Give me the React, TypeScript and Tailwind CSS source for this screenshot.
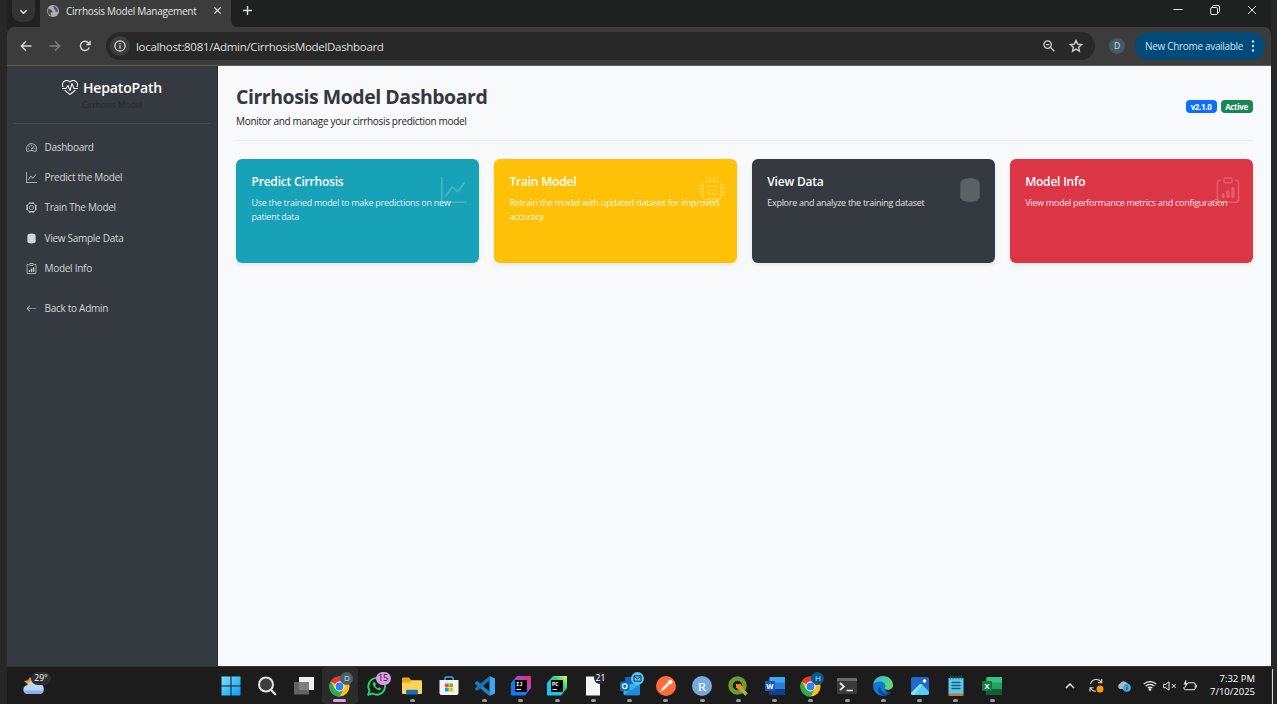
import React from "react";
import { BsHeartPulse, BsSpeedometer2, BsGraphUp, BsCpu, BsClipboardData, BsArrowLeft } from "react-icons/bs";

type IconProps = { className?: string };

function DataBlob({ className = "" }: IconProps) {
  return (
    <svg viewBox="0 0 16 16" fill="currentColor" className={className}>
      <path d="M2 4C2 2 4.5 .7 8 .7S14 2 14 4v8c0 2-2.500 3.300-6 3.300S2 14 2 12z" />
    </svg>
  );
}

const navItems = [
  { label: "Dashboard", Icon: BsSpeedometer2 },
  { label: "Predict the Model", Icon: BsGraphUp },
  { label: "Train The Model", Icon: BsCpu },
  { label: "View Sample Data", Icon: DataBlob },
  { label: "Model Info", Icon: BsClipboardData },
];

const cards = [
  { title: "Predict Cirrhosis", text: ["Use the trained model to make predictions on new", "patient data"], Icon: BsGraphUp, bg: "bg-[#18a2b8]" },
  { title: "Train Model", text: ["Retrain the model with updated dataset for improved", "accuracy"], Icon: BsCpu, bg: "bg-[#ffc108]" },
  { title: "View Data", text: ["Explore and analyze the training dataset"], Icon: DataBlob, bg: "bg-[#343a40]" },
  { title: "Model Info", text: ["View model performance metrics and configuration"], Icon: BsClipboardData, bg: "bg-[#dc3546]" },
];

function Chrome({ badge, color }: { badge: string; color: string }) {
  return (
    <div className="relative">
      <svg viewBox="0 0 48 48" className="size-[21px]">
        <circle cx="24" cy="24" r="23" fill="#fbc116" />
        <path d="M24 24 4 12.500A23 23 0 0 1 44 12.500H24z" fill="#e33b2e" />
        <path d="M4 12.500A23 23 0 0 0 24 47l10-17.300L24 24 14 29.700z" fill="#2da94f" />
        <circle cx="24" cy="24" r="11.500" fill="#fff" />
        <circle cx="24" cy="24" r="9" fill="#3b7ded" />
      </svg>
      <span className={`absolute -top-[4px] left-[11px] flex size-[13px] items-center justify-center rounded-full text-[8px] text-[#d5e3ea] ${color}`}>{badge}</span>
    </div>
  );
}

function Office({ letter, light, mid, dark, box }: { letter: string; light: string; mid: string; dark: string; box: string }) {
  return (
    <svg viewBox="0 0 20 20" className="size-5">
      <rect x="4.500" y="1" width="15.500" height="18" rx="1" fill={mid} />
      <path d="M4.500 2a1 1 0 0 1 1-1H19a1 1 0 0 1 1 1v4.500H4.500z" fill={light} />
      <path d="M4.500 13H20v5a1 1 0 0 1-1 1H5.500a1 1 0 0 1-1-1z" fill={dark} />
      <rect x="0" y="5" width="10" height="10" rx="1" fill={box} />
      <text x="5" y="12.800" textAnchor="middle" fontSize="7.500" fontWeight="700" fill="#fff" fontFamily="Open Sans, sans-serif">{letter}</text>
    </svg>
  );
}

function JetBrains({ label, a, b, c }: { label: string; a: string; b: string; c: string }) {
  return (
    <svg viewBox="0 0 20 20" className="size-5">
      <defs>
        <linearGradient id={`jb${label}`} x1="0" y1="1" x2="1" y2="0">
          <stop offset=".35" stopColor={a} />
          <stop offset=".65" stopColor={b} />
          <stop offset="1" stopColor={c} />
        </linearGradient>
      </defs>
      <path d="M6 0h13q1 0 1 1v11l-6 7.500H1q-1 0-1-1V7z" fill={`url(#jb${label})`} />
      <rect x="4" y="4" width="12" height="12" fill="#000" />
      <text x="5" y="10" fontSize="5.500" fontWeight="700" fill="#fff" fontFamily="Liberation Mono, monospace">{label}</text>
      <rect x="5.500" y="13" width="4.500" height="1" fill="#fff" />
    </svg>
  );
}

const apps: { icon: React.ReactNode; run: boolean; active?: boolean }[] = [
  {
    run: false,
    icon: (
      <svg viewBox="0 0 20 20" className="size-5">
        <defs>
          <linearGradient id="win" x1="0" y1="0" x2="1" y2="1" gradientUnits="objectBoundingBox">
            <stop stopColor="#7fe0fc" />
            <stop offset="1" stopColor="#0a9bf5" />
          </linearGradient>
        </defs>
        <path d="M.5 .5h9v9h-9zM10.500 .5h9v9h-9zM.5 10.500h9v9h-9zM10.500 10.500h9v9h-9z" fill="url(#win)" />
      </svg>
    ),
  },
  {
    run: false,
    icon: (
      <svg viewBox="0 0 20 20" className="size-5">
        <circle cx="9" cy="8.500" r="7" fill="#3d3d3d" stroke="#e4e4e4" strokeWidth="2" />
        <path d="m14.200 14 4 4.300" stroke="#e4e4e4" strokeWidth="2.200" strokeLinecap="round" />
      </svg>
    ),
  },
  {
    run: false,
    icon: (
      <svg viewBox="0 0 20 20" className="size-5">
        <rect x="5" y="1" width="15" height="13" fill="#f0f0f0" />
        <rect x="0" y="6" width="15" height="12.500" fill="#6e6e6e" fillOpacity=".88" />
      </svg>
    ),
  },
  { run: true, active: true, icon: <Chrome badge="D" color="bg-[#46606c]" /> },
  {
    run: false,
    icon: (
      <div className="relative">
        <svg viewBox="0 0 24 24" className="size-[21px]" fill="none">
          <path d="M2.500 21.500 4 16.500A9.500 9.500 0 1 1 7.500 20z" stroke="#25d366" strokeWidth="2.200" strokeLinejoin="round" />
          <path d="M8 7.500c-2 3 4.500 10 8.500 8.500l.8-2-2.300-1.200-1.200 1.200c-1.500-.5-2.800-1.800-3.300-3.300l1-1.200L10.200 7z" fill="#25d366" />
        </svg>
        <span className="absolute -top-[4px] left-[10px] flex h-[13px] w-[15px] items-center justify-center rounded-full bg-[#dd9be6] text-[9px] text-[#241026]">15</span>
      </div>
    ),
  },
  {
    run: true,
    icon: (
      <svg viewBox="0 0 20 20" className="size-5">
        <path d="M0 2.500q0-1 1-1h6l2 2.500h10q1 0 1 1v5H0z" fill="#e8a317" />
        <path d="M0 6.500h7l1.500-1.500H19q1 0 1 1V17q0 1-1 1H1q-1 0-1-1z" fill="#ffd358" />
        <path d="M4 18.500v-3.500q0-1.300 1.300-1.300h9.400q1.300 0 1.300 1.300v3.500z" fill="#1570c0" />
      </svg>
    ),
  },
  {
    run: false,
    icon: (
      <svg viewBox="0 0 20 20" className="size-5">
        <path d="M6 5V2q0-1 1-1h6q1 0 1 1v3" stroke="#35a9e8" strokeWidth="1.500" fill="none" />
        <path d="M.5 4h19v13q0 2-2 2h-15q-2 0-2-2z" fill="#f3f3f3" />
        <path d="M6 7.500h3.700v3.700H6z" fill="#f25022" />
        <path d="M10.300 7.500H14v3.700h-3.700z" fill="#7fba00" />
        <path d="M6 11.800h3.700v3.700H6z" fill="#00a4ef" />
        <path d="M10.300 11.800H14v3.700h-3.700z" fill="#ffb900" />
      </svg>
    ),
  },
  {
    run: true,
    icon: (
      <svg viewBox="0 0 20 20" className="size-5">
        <path d="M14.500 0 20 2.400v15.200L14.500 20z" fill="#3aa7f2" />
        <path d="M0 6.700 2 5l12.500 10.500V20L0 7.800z" fill="#1b86cf" />
        <path d="M0 13.300 2 15 14.500 4.500V0L0 12.200z" fill="#1174b8" />
      </svg>
    ),
  },
  { run: true, icon: <JetBrains label="IJ" a="#0a7cff" b="#b044c8" c="#fe2857" /> },
  { run: true, icon: <JetBrains label="PC" a="#14c8ee" b="#21d789" c="#fcf84a" /> },
  {
    run: true,
    icon: (
      <div className="relative">
        <svg viewBox="0 0 14 20" className="h-5 w-[14px]">
          <path d="M0 .5h9l5 5v14H0z" fill="#f5f5f5" />
        </svg>
        <span className="absolute -top-[4px] left-[8px] flex size-[12px] items-center justify-center rounded-full bg-[#292833] text-[8.500px] text-white">21</span>
      </div>
    ),
  },
  {
    run: true,
    icon: (
      <div className="relative">
        <svg viewBox="0 0 20 20" className="size-5">
          <rect x="5" y="1" width="13" height="11" fill="#1066b8" />
          <path d="M3.500 8 19.500 8v10q0 1.200-1.200 1.200H5q-1.500 0-1.500-1.500z" fill="#35b1ee" />
          <path d="M3.500 19 20 8.500V18q0 1.200-1.200 1.200z" fill="#1b8ddb" />
          <rect x="0" y="5.500" width="9.500" height="9.500" rx="1" fill="#0f6cbd" />
          <circle cx="4.750" cy="10.250" r="2.300" fill="none" stroke="#fff" strokeWidth="1.300" />
        </svg>
        <svg viewBox="0 0 13 13" className="absolute -top-[4px] left-[11px] size-[13px]">
          <circle cx="6.500" cy="6.500" r="6.500" fill="#5cc3ee" />
          <path d="M3 3.800h7v5.400H3zM3 4.300l3.500 2.500L10 4.300" fill="none" stroke="#123a50" />
        </svg>
      </div>
    ),
  },
  {
    run: true,
    icon: (
      <svg viewBox="0 0 20 20" className="size-5">
        <circle cx="10" cy="10" r="10" fill="#ff6c37" />
        <path d="M4.500 15.500 7 11.500l5-5 1.500 1.500-5 5zM12.300 6.300a2 2 0 1 1 1.700 1.700z" fill="#fff" stroke="#fff" strokeWidth=".5" />
      </svg>
    ),
  },
  {
    run: true,
    icon: (
      <svg viewBox="0 0 20 20" className="size-5">
        <circle cx="10" cy="10" r="10" fill="#75aadb" />
        <text x="10.200" y="14.500" textAnchor="middle" fontSize="13" fill="#fff" fontFamily="Liberation Serif, serif">R</text>
      </svg>
    ),
  },
  {
    run: true,
    icon: (
      <svg viewBox="0 0 20 20" className="size-5">
        <circle cx="9.500" cy="9.500" r="7" fill="none" stroke="#6a9c2b" strokeWidth="4.500" />
        <path d="m10 10 8.500 8.500" stroke="#95c13d" strokeWidth="3.500" />
        <path d="M8 8h4.500l3 4-3.300 3L8 11.500z" fill="#ef8a1b" />
      </svg>
    ),
  },
  { run: true, icon: <Office letter="W" light="#41a5ee" mid="#2b7cd3" dark="#103f91" box="#185abd" /> },
  { run: true, icon: <Chrome badge="H" color="bg-[#0b5596]" /> },
  {
    run: true,
    icon: (
      <svg viewBox="0 0 20 20" className="size-5">
        <path d="M0 3q0-1 1-1h18q1 0 1 1v4H0z" fill="#6b6b6b" />
        <path d="M0 5h20v12q0 1-1 1H1q-1 0-1-1z" fill="#3b3b3b" />
        <path d="m3 7 4 3.500L3 14M9.500 14.500H16" stroke="#f0f0f0" strokeWidth="1.700" fill="none" />
      </svg>
    ),
  },
  {
    run: true,
    icon: (
      <svg viewBox="0 0 20 20" className="size-5">
        <defs>
          <linearGradient id="edge" x1="0" x2="1" y1="0" y2=".5">
            <stop stopColor="#2bb5f0" />
            <stop offset="1" stopColor="#5fdc6b" />
          </linearGradient>
        </defs>
        <circle cx="10" cy="10" r="10" fill="#1277d0" />
        <path d="M.2 8.500C1 3.500 5 0 10 0c5.500 0 10 4 10 9 0 3-2.500 5-5 5-2 0-3.300-.7-3.300-1.700 0-.6.8-1 .8-2.300C12.500 7.500 10 5.500 7 5.500 4 5.500 1.500 6.500.2 8.500z" fill="url(#edge)" />
        <path d="M7.200 10.500c0 4 3.300 7 8 6.500 1-.1 2-.5 3-1C16.500 18.500 13.500 20 10.500 20 7 19 4.800 16 5.200 12.500z" fill="#0c4a9c" />
        <path d="M11.700 12.300c0 1 1.300 1.700 3.300 1.700 2 0 3.600-1 4.500-2.500l.5 2.500-1.800 2c-3 1.500-6 0-6.500-3.700z" fill="#1c1c1c" />
      </svg>
    ),
  },
  {
    run: true,
    icon: (
      <svg viewBox="0 0 20 20" className="size-5">
        <rect x="1" y="1" width="18" height="18" rx="2" fill="#2468c8" />
        <path d="M1 17 9.500 8.500q1.300-1.200 2.600 0L19 15.500V17q0 2-2 2H3q-2 0-2-2z" fill="#58cdf5" />
        <path d="M1 17 9.500 8.500q1.300-1.200 2.600 0L4 19H3q-2 0-2-2z" fill="#8ae3fa" />
        <circle cx="14.500" cy="5" r="1.800" fill="#fff" />
      </svg>
    ),
  },
  {
    run: true,
    icon: (
      <svg viewBox="0 0 16 20" className="h-5 w-4">
        <path d="M.5 2h15v16H.5z" fill="#5cc8e8" />
        <path d="M.5 17.500h15V20H.5z" fill="#c8763a" />
        <path d="M2.500 .3v3M5.200 .3v3M8 .3v3M10.800 .3v3M13.500 .3v3" stroke="#146f93" strokeWidth="1.200" />
        <path d="M3.500 6.500h9M3.500 9.500h9M3.500 12.500h9" stroke="#155f80" strokeWidth="1.300" />
      </svg>
    ),
  },
  { run: true, icon: <Office letter="X" light="#33c481" mid="#21a366" dark="#185c37" box="#107c41" /> },
];

function TabStrip() {
  return (
    <div className="flex h-[27px] items-start bg-[#1f2120]">
      <div className="flex h-[27px] w-[33px] items-start pl-[5px]">
        <div className="flex h-[22px] w-[23px] items-center justify-center rounded-b-[9px] bg-[#333433]">
          <svg viewBox="0 0 10 10" className="size-[9px]" fill="none" stroke="#e6e6e6" strokeWidth="1.600"><path d="m1.500 3.500 3.500 3.500 3.500-3.500" /></svg>
        </div>
      </div>
      <div className="flex h-[27px] w-[191px] items-center bg-[#3c3c3c] pb-[6px]">
        <svg viewBox="0 0 24 24" className="ml-[7px] size-[12px]">
          <circle cx="12" cy="12" r="12" fill="#a9b0b7" />
          <path d="M3 6.500c2 3 5 2 7 4.500s1 4-1 4-2 3 0 6.500c-5-1-8.500-6-7.500-12zM13 2c-1 3 2 3 1 5s4 2 3 5 3 2 4.500 1C22 7 18 2.500 13 2z" fill="#4b5157" />
        </svg>
        <span className="relative top-[0.500px] ml-[7px] text-[10px] tracking-[-0.270px] whitespace-nowrap text-[#e3e3e3]">Cirrhosis Model Management</span>
        <svg viewBox="0 0 10 10" className="mr-[9px] ml-auto size-[9px]" stroke="#e6e6e6" strokeWidth="1.400"><path d="m1.500 1.500 7 7M8.500 1.500l-7 7" /></svg>
      </div>
      <svg viewBox="0 0 6 6" className="mt-[21px] size-[6px]" fill="#3c3c3c"><path d="M0 0a6 6 0 0 0 6 6H0z" /></svg>
      <svg viewBox="0 0 10 10" className="mt-[5px] ml-[5px] size-[11px]" stroke="#e0e0e0" strokeWidth="1.300"><path d="M5 1v8M1 5h8" /></svg>
      <div className="mt-[4px] mr-[14px] ml-auto flex items-center gap-[27px] text-[#e8e8e8]">
        <svg viewBox="0 0 10 12" className="h-3 w-[10px]" stroke="currentColor"><path d="M.5 5.500h9" /></svg>
        <svg viewBox="0 0 10 12" className="h-3 w-[10px]" stroke="currentColor" fill="none"><rect x=".7" y="3.500" width="6.800" height="7" rx="1.300" /><path d="M2.500 3V2.500q0-1 1-1H8q1.500 0 1.500 1.500v4.500q0 1-1.500 1" /></svg>
        <svg viewBox="0 0 10 12" className="h-3 w-[10px]" stroke="currentColor"><path d="m1 2 8 8M9 2l-8 8" /></svg>
      </div>
    </div>
  );
}

function Toolbar() {
  return (
    <div className="bg-[#1f2120]">
      <div className="flex h-[39px] items-center rounded-t-[7px] border-b border-[#5a5b5b] bg-[#3c3c3c]">
        <svg viewBox="0 0 12 12" className="ml-[13px] size-3" fill="none" stroke="#d8d8d8" strokeWidth="1.400"><path d="M11.500 6H1.500M6 1.300 1.300 6 6 10.700" /></svg>
        <svg viewBox="0 0 12 12" className="ml-[17px] size-3" fill="none" stroke="#7f7f7f" strokeWidth="1.400"><path d="M.5 6h10M6 1.300 10.700 6 6 10.700" /></svg>
        <svg viewBox="0 0 12 12" className="ml-[18px] size-3" fill="none" stroke="#d8d8d8" strokeWidth="1.400"><path d="M10.300 7.500A4.600 4.600 0 1 1 9.600 3L10.800 4.300M11 .8v3.700H7.300" /></svg>
        <div className="ml-[15px] flex h-[28px] w-[989px] items-center rounded-full bg-[#282828] pl-[4px]">
          <span className="flex size-[20px] items-center justify-center rounded-full bg-[#3c3c3c]">
            <svg viewBox="0 0 12 12" className="size-3" fill="none" stroke="#e3e3e3" strokeWidth="1.200"><circle cx="6" cy="6" r="5.200" /><path d="M6 5.300v3.500M6 3v1.300" /></svg>
          </span>
          <span className="mt-px ml-[6px] text-[11.500px] tracking-[-0.310px] whitespace-nowrap text-[#dedede]">localhost:8081/Admin/CirrhosisModelDashboard</span>
          <svg viewBox="0 0 12 12" className="ml-auto size-3" fill="none" stroke="#d0d0d0" strokeWidth="1.300"><circle cx="4.600" cy="4.600" r="3.700" /><path d="m7.300 7.300 4 4M3 4.600h3.200" /></svg>
          <svg viewBox="0 0 24 24" className="mr-[12px] ml-[14px] size-[14px]" fill="none" stroke="#d8d8d8" strokeWidth="2.200"><path d="m12 2.500 2.800 6.300 6.900.7-5.200 4.600 1.500 6.800-6-3.600-6 3.600 1.500-6.800-5.200-4.600 6.900-.7z" /></svg>
        </div>
        <span className="ml-[14px] flex size-[16px] items-center justify-center rounded-full bg-[#455a64] text-[8.500px] text-[#d8e6ee]">D</span>
        <div className="ml-[10px] flex h-[28px] w-[130px] items-center rounded-full bg-[#024a77] pl-[10px]">
          <span className="text-[10px] tracking-[-0.320px] whitespace-nowrap text-[#c5e4fa]">New Chrome available</span>
          <svg viewBox="0 0 4 14" className="mr-[10px] ml-auto h-[14px] w-1" fill="#c5e4fa"><circle cx="2" cy="2.500" r="1.200" /><circle cx="2" cy="7" r="1.200" /><circle cx="2" cy="11.500" r="1.200" /></svg>
        </div>
      </div>
    </div>
  );
}

function Sidebar() {
  return (
    <aside className="flex w-[211px] flex-col border-r border-[#2a2e33] bg-[#343a40] px-[7px]">
      <div className="flex h-[58px] flex-col items-center border-b border-[#474d55] pt-[13px]">
        <div className="flex h-[18px] items-center gap-[5px] text-white">
          <BsHeartPulse className="size-[16px]" />
          <span className="text-[14px] leading-[18px] font-semibold tracking-[-0.170px] whitespace-nowrap">HepatoPath</span>
        </div>
        <span className="text-[8.500px] leading-[15px] tracking-[-0.140px] whitespace-nowrap text-[#272b2f]">Cirrhosis Model</span>
      </div>
      <nav className="flex flex-col pt-[8px] text-[10px] tracking-[-0.280px] text-[#d3d6d8]">
        {navItems.map(({ label, Icon }) => (
          <a key={label} className="flex h-[30.300px] items-center pl-[11.500px]">
            <Icon className="mr-[8px] size-[11px]" />
            <span className="whitespace-nowrap">{label}</span>
          </a>
        ))}
        <a className="mt-[10px] flex h-[30.300px] items-center pl-[11.500px]">
          <BsArrowLeft className="mr-[8px] size-[11px]" />
          <span className="whitespace-nowrap">Back to Admin</span>
        </a>
      </nav>
    </aside>
  );
}

function Main() {
  return (
    <main className="flex-1 bg-[#f8f9fb] pr-[18.500px] pl-[18px]">
      <header className="flex h-[75px] items-start justify-between border-b border-[#eceef1]">
        <div className="pt-[18px]">
          <h1 className="w-fit text-[19.500px] leading-[26px] font-bold tracking-[-0.460px] whitespace-nowrap text-[#32383e]">Cirrhosis Model Dashboard</h1>
          <p className="mt-[3px] w-fit text-[10px] leading-[16px] tracking-[-0.316px] whitespace-nowrap text-[#212529]">Monitor and manage your cirrhosis prediction model</p>
        </div>
        <div className="flex gap-[4px] pt-[34px] text-[8px] leading-[13px] font-bold tracking-[-0.350px] text-white">
          <span className="flex h-[13px] w-[31px] items-center justify-center rounded-[4px] bg-[#0d6efd]">v2.1.0</span>
          <span className="flex h-[13px] w-[32px] items-center justify-center rounded-[4px] bg-[#198754]">Active</span>
        </div>
      </header>
      <section className="mt-[18px] grid grid-cols-4 gap-[15px]">
        {cards.map(({ title, text, Icon, bg }) => (
          <article key={title} className={`relative h-[104px] rounded-[6px] px-[15.500px] pt-[14px] text-white shadow-[0_2px_4px_rgba(0,0,0,0.08)] ${bg}`}>
            <h2 className="w-fit text-[12px] leading-[18px] font-semibold tracking-[-0.200px] whitespace-nowrap">{title}</h2>
            <div className="mt-[5px] text-[9px] leading-[13.800px] tracking-[-0.280px] opacity-85">
              {text.map((t) => <p key={t} className="w-fit whitespace-nowrap">{t}</p>)}
            </div>
            <Icon className="absolute top-[18px] right-[11.500px] size-[26px] opacity-20" />
          </article>
        ))}
      </section>
    </main>
  );
}

function Taskbar() {
  return (
    <footer className="flex h-[38px] border-t border-[#30332f] bg-[#1c1c1c] text-white">
      <div className="relative w-[206px] shrink-0">
        <svg viewBox="0 0 22 18" className="absolute top-[10px] left-[16px] h-[18px] w-[22px]">
          <path d="m1 4 4-.8L7 0l2 3 3 1-2 6-6 1 .5-4z" fill="#f09a24" />
          <path d="M5 17a4.500 4.500 0 0 1-.3-9A6 6 0 0 1 15.500 6.500 5.300 5.300 0 0 1 16.500 17z" fill="#bcd3f5" />
          <path d="M5 17a4.500 4.500 0 0 1-3.800-3.500H21A5 5 0 0 1 16.500 17z" fill="#8eb0ea" />
        </svg>
        <span className="absolute top-[5px] left-[24px] flex h-[13px] w-[20px] items-center justify-center rounded-full bg-[#2e2e2e] text-[8.500px]">29°</span>
      </div>
      {apps.map((a, i) => (
        <div key={i} className={`flex w-[36.240px] shrink-0 flex-col items-center pt-[9px] ${a.active ? "rounded-[4px] bg-[#2b2b2b]" : ""}`}>
          <div className="flex h-5 items-center">{a.icon}</div>
          {a.run && <div className={`mt-[3px] h-[2.500px] shrink-0 rounded-full ${a.active ? "w-[13px] bg-[#dba0e4]" : "w-[5px] bg-[#9a9a9a]"}`} />}
        </div>
      ))}
      <div className="ml-auto flex items-center pr-[16px]">
        <svg viewBox="0 0 10 10" className="size-[10px]" fill="none" stroke="#fff" strokeWidth="1.300"><path d="M1 7l4-4 4 4" /></svg>
        <svg viewBox="0 0 15 15" className="ml-[14px] size-[15px]" fill="none" stroke="#d8d8d8" strokeWidth="1.100"><path d="M1.500 6A6 6 0 0 1 12.500 4.500M12.800 1v3.700H9M1 13.500v-3.700h3.500M1.500 10A6 6 0 0 0 7 13.200" /><circle cx="11" cy="11" r="3.500" fill="#ff9a0a" stroke="none" /></svg>
        <svg viewBox="0 0 14 12" className="ml-[13px] h-3 w-[14px]"><path d="M3 9a3 3 0 0 1 0-5.500A4 4 0 0 1 10 3q3 1 3 4L7 9z" fill="#b5b5b5" /><circle cx="9.800" cy="7.700" r="4" fill="#45b0e8" /><path d="M9.800 7v3M9.800 5.300v1" stroke="#123" /></svg>
        <svg viewBox="0 0 14 11" className="ml-[12px] h-[11px] w-[14px]" fill="none" stroke="#fff" strokeWidth="1.100"><path d="M.7 4.200a9 9 0 0 1 12.600 0M2.700 6.200a6 6 0 0 1 8.600 0M4.700 8.100a3.200 3.200 0 0 1 4.600 0" /><circle cx="7" cy="9.500" r=".8" fill="#fff" /></svg>
        <svg viewBox="0 0 14 10" className="ml-[6px] h-[10px] w-[14px]" fill="none" stroke="#e8e8e8"><path d="M.6 3.300h2.200L6 .8v8.400L2.800 6.700H.6zM8.800 3l4 4M12.800 3l-4 4" /></svg>
        <svg viewBox="0 0 14 12" className="ml-[6px] h-3 w-[14px]" fill="none" stroke="#e8e8e8"><path d="M5 2.800h6q1.200 0 1.200 1.200v4.500q0 1.200-1.200 1.200H2.200Q1 9.700 1 8.500V7M13.300 5v2.500" /><path d="M3 .3.800 4.300h2L2 7.500l2.800-4.200H3z" fill="#e8e8e8" strokeWidth=".5" /></svg>
        <div className="-mt-[2px] ml-[12px] w-[46px] text-right text-[9.500px] leading-[13px] whitespace-nowrap">
          <p>7:32 PM</p>
          <p>7/10/2025</p>
        </div>
      </div>
    </footer>
  );
}

export default function App() {
  return (
    <div className="flex h-[704px] w-[1277px] overflow-hidden bg-[#272727] font-['Open_Sans','Noto_Sans',sans-serif]">
      <div className="ml-[7px] flex w-[1264px] flex-col">
        <TabStrip />
        <Toolbar />
        <div className="flex flex-1">
          <Sidebar />
          <Main />
        </div>
        <Taskbar />
      </div>
      <div className="mt-auto ml-[1px] h-[35px] w-px bg-[#d8d8d8]" />
    </div>
  );
}
